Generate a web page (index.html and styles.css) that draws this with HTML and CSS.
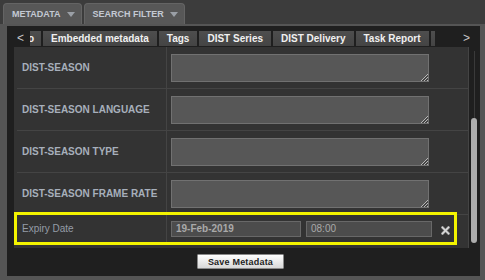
FILE: index.html
```html
<!DOCTYPE html>
<html>
<head>
<meta charset="utf-8">
<link rel="stylesheet" href="styles.css">
</head>
<body>
<div class="top-tabs">
  <div class="ttab"><span>METADATA</span><svg class="tri" width="8" height="5" viewBox="0 0 8 5"><path d="M0 0H8L4 5Z" fill="#9a9fa6"/></svg></div>
  <div class="ttab"><span>SEARCH FILTER</span><svg class="tri" width="8" height="5" viewBox="0 0 8 5"><path d="M0 0H8L4 5Z" fill="#9a9fa6"/></svg></div>
</div>
<div class="frame">
  <div class="panel">
    <div class="subtabs">
      <span class="arrow left">&lt;</span>
      <div class="stabs">
        <span class="stab part-left"><span class="clip">Info</span></span>
        <span class="stab">Embedded metadata</span>
        <span class="stab">Tags</span>
        <span class="stab">DIST Series</span>
        <span class="stab">DIST Delivery</span>
        <span class="stab">Task Report</span>
        <span class="stab part-right">Audit</span>
      </div>
      <span class="arrow right">&gt;</span>
    </div>
    <div class="body">
      <div class="rows">
        <div class="row">
          <div class="lbl">DIST-SEASON</div>
          <div class="val"><div class="ta"><svg class="grip" width="8" height="8" viewBox="0 0 8 8"><path d="M8 1L1 8M8 4L4 8M8 7L7 8" stroke="#b8b8b8" stroke-width="1"/><path d="M8 2.5L2.5 8M8 5.5L5.5 8" stroke="#333" stroke-width="1"/></svg></div></div>
        </div>
        <div class="row">
          <div class="lbl">DIST-SEASON LANGUAGE</div>
          <div class="val"><div class="ta"><svg class="grip" width="8" height="8" viewBox="0 0 8 8"><path d="M8 1L1 8M8 4L4 8M8 7L7 8" stroke="#b8b8b8" stroke-width="1"/><path d="M8 2.5L2.5 8M8 5.5L5.5 8" stroke="#333" stroke-width="1"/></svg></div></div>
        </div>
        <div class="row">
          <div class="lbl">DIST-SEASON TYPE</div>
          <div class="val"><div class="ta"><svg class="grip" width="8" height="8" viewBox="0 0 8 8"><path d="M8 1L1 8M8 4L4 8M8 7L7 8" stroke="#b8b8b8" stroke-width="1"/><path d="M8 2.5L2.5 8M8 5.5L5.5 8" stroke="#333" stroke-width="1"/></svg></div></div>
        </div>
        <div class="row">
          <div class="lbl">DIST-SEASON FRAME RATE</div>
          <div class="val"><div class="ta"><svg class="grip" width="8" height="8" viewBox="0 0 8 8"><path d="M8 1L1 8M8 4L4 8M8 7L7 8" stroke="#b8b8b8" stroke-width="1"/><path d="M8 2.5L2.5 8M8 5.5L5.5 8" stroke="#333" stroke-width="1"/></svg></div></div>
        </div>
        <div class="row expiry">
          <div class="lbl light">Expiry Date</div>
          <div class="val">
            <div class="inp date">19-Feb-2019</div>
            <div class="inp time">08:00</div>
            <svg class="clear" width="9" height="9" viewBox="0 0 9 9"><path d="M1.5 1.5L7.5 7.5M7.5 1.5L1.5 7.5" stroke="#7a7a7a" stroke-width="3" stroke-linecap="square"/><path d="M1.5 1.5L7.5 7.5M7.5 1.5L1.5 7.5" stroke="#dcdcdc" stroke-width="1.6" stroke-linecap="square"/></svg>
          </div>
        </div>
      </div>
      <div class="scrollbar"><div class="track"></div><div class="thumb"></div></div>
    </div>
    <div class="footer"><button class="save">Save Metadata</button></div>
  </div>
</div>
</body>
</html>
```
FILE: styles.css
```css
html, body {
  margin: 0;
  padding: 0;
}
body {
  width: 485px;
  height: 280px;
  overflow: hidden;
  background: #3c3c3c;
  font-family: "Liberation Sans", Arial, sans-serif;
}
.top-tabs {
  display: flex;
  gap: 2px;
  padding: 3px 0 0 3px;
  height: 21px;
}
.ttab {
  box-sizing: border-box;
  height: 21px;
  display: flex;
  align-items: center;
  gap: 6px;
  padding: 0 6px 0 8px;
  background: #575757;
  border: 1px solid #646464;
  border-bottom: none;
  border-radius: 4px 4px 0 0;
  font-size: 9px;
  font-weight: bold;
  color: #c3c9d3;
}
.tri { display: block; }
.frame {
  box-sizing: border-box;
  height: 256px;
  background: #555555;
  padding: 2px 5px 4px 7px;
}
.panel {
  height: 250px;
  background: #1f1f1f;
  display: flex;
  flex-direction: column;
}
.subtabs {
  height: 21px;
  flex: none;
  display: flex;
  align-items: flex-start;
  padding-top: 5px;
  box-sizing: border-box;
}
.arrow {
  flex: none;
  height: 15px;
  line-height: 15px;
  font-size: 12px;
  color: #c8c8c8;
}
.arrow.left {
  width: 23px;
  padding-left: 10px;
  box-sizing: border-box;
}
.arrow.right {
  margin-left: auto;
  padding-right: 10px;
}
.stabs {
  width: 405px;
  flex: none;
  overflow: hidden;
  display: flex;
  gap: 2px;
}
.stab {
  flex: none;
  height: 15px;
  line-height: 15px;
  padding: 0 8px;
  background: linear-gradient(#4e4e4e, #444444);
  font-size: 10px;
  font-weight: bold;
  color: #f0f0f0;
  white-space: nowrap;
}
.part-left {
  width: 11px;
  box-sizing: border-box;
  padding: 0 7px 0 0;
  overflow: hidden;
  display: flex;
  justify-content: flex-end;
}
.part-left .clip {
  flex: none;
}
.body {
  flex: 1;
  display: flex;
  padding-left: 7px;
  min-height: 0;
}
.rows {
  width: 455px;
  box-sizing: border-box;
  background: #333333;
  padding-left: 3px;
  border-right: 1px solid #444444;
  overflow: hidden;
}
.row {
  display: flex;
  height: 42px;
  box-sizing: border-box;
  border-bottom: 1px solid #444444;
}
.lbl {
  width: 150px;
  flex: none;
  box-sizing: border-box;
  border-right: 1px solid #444444;
  padding-left: 5px;
  display: flex;
  align-items: center;
  font-size: 10px;
  font-weight: bold;
  color: #a7afbb;
}
.lbl.light {
  font-weight: normal;
  color: #959ca7;
}
.val {
  flex: 1;
  display: flex;
  align-items: center;
  padding-left: 4px;
}
.ta {
  position: relative;
  width: 258px;
  height: 28px;
  box-sizing: border-box;
  background: #575757;
  border: 1px solid #717171;
}
.grip {
  position: absolute;
  right: 0;
  bottom: 0;
  display: block;
}
.expiry {
  height: 27px;
  width: 437px;
  border-bottom: none;
  outline: 3px solid #f4f400;
}
.inp {
  height: 16px;
  box-sizing: border-box;
  background: #4c4c4c;
  border: 1px solid #686868;
  font-size: 10px;
  line-height: 14px;
  padding-left: 4px;
  color: #a9a9a9;
}
.inp.date {
  width: 130px;
  font-weight: bold;
}
.inp.time {
  width: 126px;
  margin-left: 5px;
}
.clear {
  display: block;
  margin-left: 9px;
  margin-top: 4px;
}
.scrollbar {
  position: relative;
  width: 11px;
  flex: none;
}
.track {
  position: absolute;
  left: 5px;
  top: 4px;
  width: 1px;
  height: 70px;
  background: #3a3a3a;
}
.thumb {
  position: absolute;
  left: 2px;
  top: 71px;
  width: 6px;
  height: 125px;
  border-radius: 3px;
  background: #adadad;
}
.footer {
  height: 28px;
  flex: none;
  display: flex;
  justify-content: center;
  align-items: flex-start;
  padding-top: 6px;
  padding-right: 6px;
  box-sizing: border-box;
}
.save {
  height: 15px;
  width: 87px;
  padding: 0;
  border: 1px solid #8a8a8a;
  border-radius: 1px;
  background: linear-gradient(#ffffff, #d8d8d8);
  font-family: "Liberation Sans", Arial, sans-serif;
  font-size: 9px;
  font-weight: bold;
  color: #1e1e1e;
  letter-spacing: 0.2px;
}
```
